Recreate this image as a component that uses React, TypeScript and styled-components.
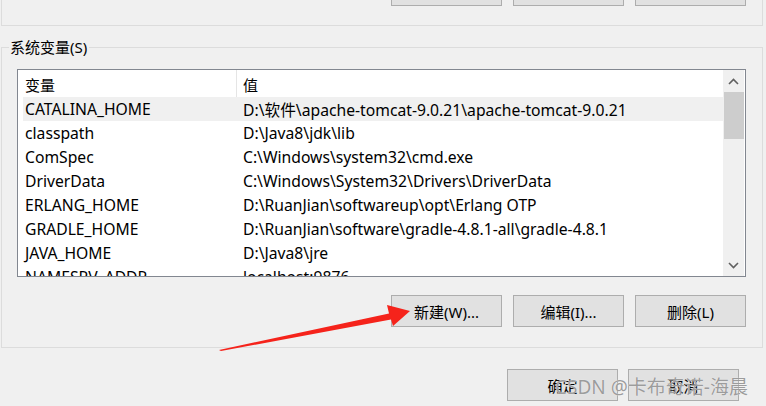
import React from "react";
import styled, { createGlobalStyle } from "styled-components";

const Global = createGlobalStyle`
  html, body { margin: 0; padding: 0; background: #f0f0f0; }
  body { width: 766px; height: 406px; overflow: hidden; }
  * { box-sizing: border-box; }
`;

const FONT = `"Noto Sans", "Noto Sans CJK SC", sans-serif`;

const Page = styled.div`
  position: relative;
  width: 766px;
  height: 406px;
  overflow: hidden;
  background: #f0f0f0;
  font-family: ${FONT};
  color: #000;
  display: flex;
  flex-direction: column;
`;

const UpperGroup = styled.div`
  margin: -37px 3px 0 1px;
  height: 63px;
  border: 1px solid #dcdcdc;
  padding: 10px 16px 19px 0;
  display: flex;
  justify-content: flex-end;
  gap: 11px;
`;

const Button = styled.button`
  width: 111px;
  height: 32px;
  background: #e1e1e1;
  border: 1px solid #adadad;
  font-family: ${FONT};
  font-size: 15px;
  color: #000;
  padding: 0;
  display: flex;
  align-items: center;
  justify-content: center;
`;

const Group = styled.fieldset`
  margin: 12px 3px 0 1px;
  border: 1px solid #dcdcdc;
  padding: 12px 16px 20px 15px;
  min-width: 0;
`;

const Legend = styled.legend`
  margin-left: -8px;
  padding: 0 2px 0 1px;
  font-size: 15px;
  line-height: 19px;
`;

const ListBox = styled.div`
  height: 208px;
  border: 1px solid #828790;
  background: #fff;
  display: flex;
  overflow: hidden;
`;

const ListContent = styled.div`
  flex: 1;
  overflow: hidden;
  display: flex;
  flex-direction: column;
`;

const Header = styled.div`
  height: 27px;
  flex: none;
  display: flex;
  font-size: 15px;
`;

const HeaderCell = styled.div<{ $w?: number }>`
  ${(p) => (p.$w ? `width: ${p.$w}px; border-right: 1px solid #e5e5e5;` : "flex: 1;")}
  padding-left: ${(p) => (p.$w ? 7 : 6)}px;
  padding-top: 1px;
  display: flex;
  align-items: center;
`;

const Rows = styled.div`
  padding-left: 5px;
  flex: 1;
  overflow: hidden;
`;

const Row = styled.div<{ $sel?: boolean }>`
  height: 24px;
  display: flex;
  align-items: center;
  background: ${(p) => (p.$sel ? "#f0f0f0" : "transparent")};
  font-size: 15.7px;
  white-space: nowrap;
`;

const Cell = styled.div<{ $w?: number }>`
  ${(p) => (p.$w ? `width: ${p.$w}px;` : "flex: 1;")}
  padding-left: 2px;
  overflow: hidden;
`;

const ScrollBar = styled.div`
  width: 21px;
  margin-right: 1px;
  background: #f0f0f0;
  display: flex;
  flex-direction: column;
`;

const ScrollBtn = styled.div`
  height: 22px;
  flex: none;
  display: flex;
  align-items: center;
  justify-content: center;
`;

const Thumb = styled.div`
  height: 47px;
  margin: 0 0 0 1px;
  background: #cdcdcd;
  flex: none;
`;

const Track = styled.div`
  flex: 1;
`;

const ButtonRow = styled.div`
  display: flex;
  justify-content: flex-end;
  gap: 11px;
  margin-top: 18px;
`;

const BottomRow = styled.div`
  display: flex;
  justify-content: flex-end;
  gap: 10px;
  margin: 21px 27px 0 0;
`;

const Arrow = styled.svg`
  position: absolute;
  left: 0;
  top: 0;
  pointer-events: none;
`;

const Watermark = styled.div`
  position: absolute;
  left: 555px;
  top: 374px;
  font-family: ${FONT};
  font-size: 19px;
  line-height: 26px;
  color: #9c9c9c;
  text-shadow: 0 0 1px #fff;
  white-space: nowrap;
  pointer-events: none;
`;

const Chevron = ({ up }: { up?: boolean }) => (
  <svg width="11" height="7" viewBox="0 0 11 7">
    <path
      d={up ? "M1 6 L5.5 1.5 L10 6" : "M1 1 L5.5 5.5 L10 1"}
      fill="none"
      stroke="#606060"
      strokeWidth="1.6"
    />
  </svg>
);

const rows: [string, string][] = [
  ["CATALINA_HOME", "D:\\软件\\apache-tomcat-9.0.21\\apache-tomcat-9.0.21"],
  ["classpath", "D:\\Java8\\jdk\\lib"],
  ["ComSpec", "C:\\Windows\\system32\\cmd.exe"],
  ["DriverData", "C:\\Windows\\System32\\Drivers\\DriverData"],
  ["ERLANG_HOME", "D:\\RuanJian\\softwareup\\opt\\Erlang OTP"],
  ["GRADLE_HOME", "D:\\RuanJian\\software\\gradle-4.8.1-all\\gradle-4.8.1"],
  ["JAVA_HOME", "D:\\Java8\\jre"],
  ["NAMESRV_ADDR", "localhost:9876"],
];

export default function App() {
  return (
    <Page>
      <Global />
      <UpperGroup>
        <Button />
        <Button />
        <Button />
      </UpperGroup>
      <Group>
        <Legend>系统变量(S)</Legend>
        <ListBox>
          <ListContent>
            <Header>
              <HeaderCell $w={219}>变量</HeaderCell>
              <HeaderCell>值</HeaderCell>
            </Header>
            <Rows>
              {rows.map(([k, v], i) => (
                <Row key={k} $sel={i === 0}>
                  <Cell $w={218}>{k}</Cell>
                  <Cell>{v}</Cell>
                </Row>
              ))}
            </Rows>
          </ListContent>
          <ScrollBar>
            <ScrollBtn>
              <Chevron up />
            </ScrollBtn>
            <Thumb />
            <Track />
            <ScrollBtn>
              <Chevron />
            </ScrollBtn>
          </ScrollBar>
        </ListBox>
        <ButtonRow>
          <Button>新建(W)...</Button>
          <Button>编辑(I)...</Button>
          <Button>删除(L)</Button>
        </ButtonRow>
      </Group>
      <BottomRow>
        <Button>确定</Button>
        <Button>取消</Button>
      </BottomRow>
      <Arrow width="766" height="406" viewBox="0 0 766 406">
        <polygon
          points="219,350 389,313.5 387,305 410,311 393,326 391,319.5 221,351"
          fill="#f5231b"
        />
      </Arrow>
      <Watermark>CSDN @卡布奇诺-海晨</Watermark>
    </Page>
  );
}
